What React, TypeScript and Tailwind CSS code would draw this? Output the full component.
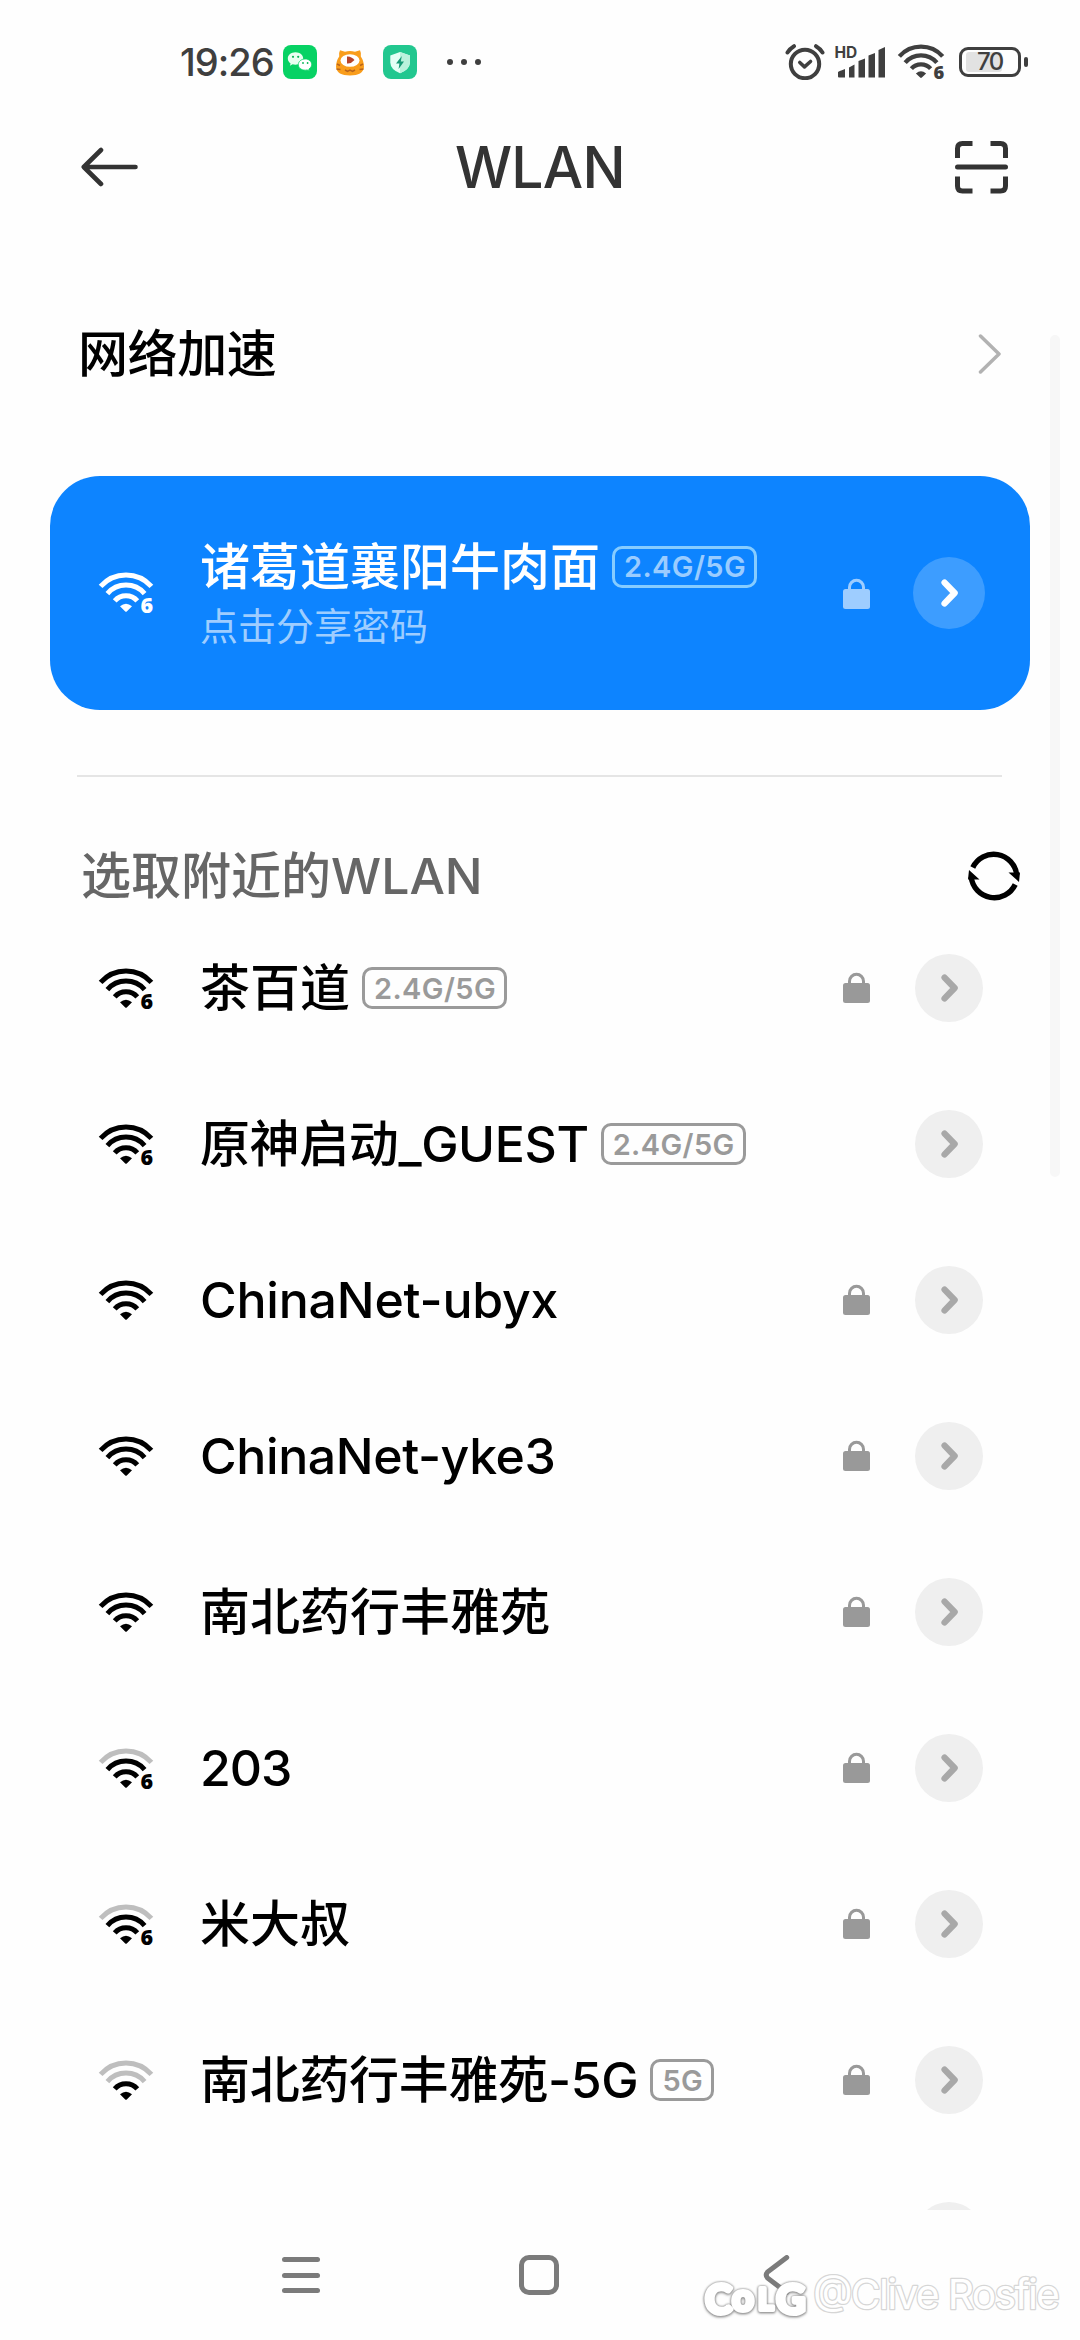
type Network = {
  name: string;
  level: number;
  wifi6?: boolean;
  band?: string;
  locked?: boolean;
  tracking?: string;
};

const networks: Network[] = [
  { name: "茶百道", level: 4, wifi6: true, band: "2.4G/5G", locked: true },
  { name: "原神启动_GUEST", level: 4, wifi6: true, band: "2.4G/5G", tracking: "tracking-[-0.4px]" },
  { name: "ChinaNet-ubyx", level: 4, locked: true, tracking: "tracking-[-0.2px]" },
  { name: "ChinaNet-yke3", level: 4, locked: true, tracking: "tracking-[-0.4px]" },
  { name: "南北药行丰雅苑", level: 4, locked: true },
  { name: "203", level: 3, wifi6: true, locked: true, tracking: "tracking-[-1px]" },
  { name: "米大叔", level: 3, wifi6: true, locked: true },
  { name: "南北药行丰雅苑-5G", level: 2, band: "5G", locked: true, tracking: "tracking-[-0.3px]" },
];

const WifiIcon = ({ level = 4, wifi6 = false, className = "" }: { level?: number; wifi6?: boolean; className?: string }) => {
  const fade = (n: number) => (level >= n ? 1 : 0.25);

  return (
    <svg viewBox="0 0 54 41" className={`overflow-visible ${className}`} fill="none" stroke="currentColor" strokeWidth="5">
      <path d="M1.6 13.4A34 34 0 0 1 52.4 13.4" opacity={fade(4)} />
      <path d="M8.4 20.6A24.6 24.6 0 0 1 45.6 20.6" opacity={fade(3)} />
      <path d="M15.7 27.8A15 15 0 0 1 38.3 27.8" opacity={fade(2)} />
      <path d="M21 33.3Q27 28 33 33.3L28 38.2Q27 39.2 26 38.2Z" fill="currentColor" stroke="none" />
      {wifi6 && (
        <text x="41.6" y="39.5" fontSize="21.5" fontWeight="800" fill="currentColor" stroke="none" className="font-['Open_Sans',sans-serif]">
          6
        </text>
      )}
    </svg>
  );
};

const LockIcon = ({ className = "" }: { className?: string }) => (
  <svg viewBox="0 0 27 31" className={className}>
    <path d="M6.5 13V9.3a7 7 0 0 1 14 0V13" fill="none" stroke="currentColor" strokeWidth="3" />
    <rect y="11" width="27" height="20" rx="2.5" fill="currentColor" />
  </svg>
);

const ArrowIcon = () => (
  <svg viewBox="0 0 18 28" className="ml-0.5 h-7 w-[18px]">
    <path d="M3.6 3.6L13.6 14L3.6 24.4" fill="none" stroke="currentColor" strokeWidth="6.4" strokeLinecap="round" strokeLinejoin="round" />
  </svg>
);

const Band = ({ children, className = "" }: { children: string; className?: string }) => (
  <span className={`flex h-[42px] items-center rounded-[10px] border-3 pr-[8px] pl-[9px] text-[29px] leading-none font-semibold tracking-[0.4px] ${className}`}>
    {children}
  </span>
);

const StatusBar = () => (
  <div className="flex h-[124px] items-center pr-[52px] pl-[180px] text-[#3f3f3f]">
    <span className="w-[103px] text-[38px] leading-none font-medium tracking-[-1px]">19:26</span>
    <svg viewBox="0 0 34 34" className="size-[34px]">
      <rect width="34" height="34" rx="8" fill="#07d264" />
      <path d="M12.5 7.2c-4.4 0-7.7 2.8-7.7 6.3 0 2 1.1 3.7 2.8 4.9l-.7 2.3 2.7-1.4c4.9 1.5 10.6-1.2 10.6-5.8 0-3.500-3.300-6.300-7.700-6.300Z" fill="#e9fff1" />
      <path d="M22.3 14c-4 0-7 2.500-7 5.700 0 3.800 4.400 6.300 8.800 5.200l2.300 1.200-.6-2c1.700-1.100 2.900-2.700 2.900-4.400 0-3.200-2.600-5.700-6.400-5.700Z" fill="#fff" stroke="#07d264" strokeWidth=".8" />
      <g fill="#07b556">
        <circle cx="10" cy="11.8" r="1.1" />
        <circle cx="15.2" cy="11.8" r="1.1" />
        <circle cx="20" cy="18" r=".9" />
        <circle cx="24.6" cy="18" r=".9" />
      </g>
    </svg>
    <svg viewBox="0 0 30 27" className="ml-[18px] h-[27px] w-[30px]">
      <path d="M5 1.2L10 2.8Q15 1.4 20 2.8L25 1.2Q26.5 4 25.8 7.5Q29 12 29 18Q28 26.5 15 26.5Q2 26.5 1 18Q1 12 4.2 7.5Q3.5 4 5 1.2Z" fill="#f99d1c" />
      <path d="M2 15l3 1.500M1.500 20l4 .5M28 15l-3 1.500M28.500 20l-4 .5M10 21l2.500 1.500 2.500-1.500 2.500 1.500 2.500-1.500" fill="none" stroke="#b8641c" strokeWidth="1.5" />
      <ellipse cx="15" cy="11.5" rx="9.5" ry="6.3" fill="#fff" />
      <path d="M12 7.5Q16 7 19.5 11Q16 15 12 14.500Z" fill="#b8432a" />
    </svg>
    <svg viewBox="0 0 34 34" className="ml-[18px] size-[34px]">
      <rect width="34" height="34" rx="8" fill="#22c78f" />
      <path d="M17 7L27 10.5V17.5Q26.5 24.5 17 28.3Q7.500 24.500 7.300 17.500V10.500Z" fill="#e4fff5" />
      <path d="M17 7L27 10.5V17.5Q26.5 24.5 17 28.3Z" fill="#b9f2dc" />
      <path d="M18.8 11L13 18.5H16.4L15.6 24L21 16.6H17.8Z" fill="#159a75" />
    </svg>
    <div className="ml-[30px] flex gap-2">
      <i className="size-1.5 rounded-full bg-current" />
      <i className="size-1.5 rounded-full bg-current" />
      <i className="size-1.5 rounded-full bg-current" />
    </div>

    <svg viewBox="0 0 40 36" className="ml-auto h-9 w-10" fill="none" stroke="currentColor" strokeLinecap="round">
      <circle cx="20" cy="20" r="14.2" strokeWidth="4" />
      <path d="M14.8 18.5L19.5 22.8L25.5 17.5" strokeWidth="3.6" strokeLinejoin="round" />
      <path d="M2.5 8.5Q5 4.5 9 2.2M37.5 8.5Q35 4.5 31 2.2" strokeWidth="4" />
    </svg>
    <svg viewBox="0 0 52 34" className="ml-[10px] h-[34px] w-[52px] overflow-visible" fill="currentColor">
      <text x="-.5" y="12.5" fontSize="15.5" fontWeight="700">HD</text>
      <path d="M3 27Q3 26.5 10 24V32.5H4Q3 32.5 3 31.5ZM14 22.5L19.5 19.5V32.5H14ZM23.5 16L30 13.5V32.5H23.5ZM33.5 10.5L40 8V32.5H33.5ZM43.5 5L50 2V32.5H43.5Z" />
    </svg>
    <WifiIcon wifi6 className="ml-[11px] h-[35px] w-[46px]" />
    <div className="ml-[15px] flex h-[30px] w-[62px] items-center rounded-[9px] border-3 border-current p-[4px]">
      <div className="relative h-5 w-[36px] rounded-[3px] bg-[#e2e2e2]">
        <span className="absolute top-0 left-[11px] text-[24px] leading-5 font-medium tracking-[-1.5px]">70</span>
      </div>
    </div>
    <i className="ml-[3px] h-2.5 w-1 rounded-full bg-current" />
  </div>
);

const Header = () => (
  <header className="flex h-[86px] items-center pr-[71px] pl-[81px] text-[#333]">
    <svg viewBox="0 0 57 40" className="h-10 w-[57px]" fill="none" stroke="currentColor" strokeWidth="4.6" strokeLinecap="round" strokeLinejoin="round">
      <path d="M54.5 20H3M20 3L2.8 20L20 37" />
    </svg>
    <h1 className="ml-[317px] text-[57px] leading-none font-[450] tracking-[-0.8px]">WLAN</h1>
    <svg viewBox="0 0 55 54" className="ml-auto h-[54px] w-[55px]" fill="none" stroke="currentColor" strokeWidth="5">
      <path d="M3.5 18V8.5Q3.5 3.5 8.5 3.5H18.5M36.5 3.5H46.5Q51.5 3.5 51.5 8.5V18M51.5 36.5V46Q51.5 51 46.5 51H36.5M18.5 51H8.5Q3.5 51 3.5 46V36.5" />
      <path d="M3.5 27H51.5" strokeLinecap="round" />
    </svg>
  </header>
);

const NetworkRow = ({ network }: { network: Network }) => (
  <li className="flex h-[156px] items-center pr-[97px] pl-[99px]">
    <WifiIcon level={network.level} wifi6={network.wifi6} className="mt-0.5 h-[41px] w-[54px]" />
    <span className={`ml-[47px] text-[50px] leading-none font-medium whitespace-nowrap text-black ${network.tracking ?? ""}`}>{network.name}</span>
    {network.band && <Band className="ml-3 border-[#9a9a9a] text-[#9a9a9a]">{network.band}</Band>}
    {network.locked && <LockIcon className="mb-0.5 ml-auto h-[31px] w-[27px] text-[#999]" />}
    <div className={`${network.locked ? "ml-[45px]" : "ml-auto"} flex size-[68px] items-center justify-center rounded-full bg-[#efefef] text-[#a8a8a8]`}>
      <ArrowIcon />
    </div>
  </li>
);

const NavBar = () => (
  <nav className="flex h-[130px] items-center pl-[282px] text-[#7b7b7b]">
    <div className="flex w-[38px] flex-col gap-[10.5px]">
      <i className="h-[5px] rounded-full bg-current" />
      <i className="h-[5px] rounded-full bg-current" />
      <i className="h-[5px] rounded-full bg-current" />
    </div>
    <div className="ml-[199px] size-10 rounded-[10px] border-[5px] border-current" />
    <svg viewBox="0 0 28 40" className="ml-[204px] h-10 w-7" fill="none" stroke="currentColor" strokeWidth="5" strokeLinecap="round">
      <path d="M23.7 2.5L4.5 17Q2 20 4.5 23L23.7 37.5" />
    </svg>
  </nav>
);

const Watermark = () => (
  <svg viewBox="0 0 380 60" className="absolute right-0 bottom-[14px] h-[60px] w-[380px]">
    <g
      className="font-['Lato',sans-serif] [filter:drop-shadow(0_0_1px_#888)_drop-shadow(0_1px_1px_#999)]"
      fill="#fff"
      stroke="#fff"
      strokeWidth="4"
      strokeLinejoin="round"
      fontWeight="900"
    >
      <text x="5" y="48" fontSize="41">C</text>
      <text x="32" y="45" fontSize="38">o</text>
      <text x="58" y="44" fontSize="30">L</text>
      <text x="76" y="48" fontSize="41">G</text>
    </g>
    <text
      x="113"
      y="43"
      fontSize="41"
      textLength="247"
      fill="#fff"
      stroke="#d6d6d6"
      strokeWidth="2.5"
      paintOrder="stroke"
      strokeLinejoin="round"
    >
      @Clive Rosfie
    </text>
  </svg>
);

export default function App() {
  return (
    <div className="relative flex h-[2340px] w-[1080px] flex-col bg-[#fefefe] font-['Inter','Noto_Sans_CJK_SC',sans-serif]">
      <StatusBar />
      <Header />

      <main className="h-[2000px] overflow-hidden">
        <div className="mt-[104px] flex h-[80px] items-center justify-between pr-[78px] pl-[78px]">
          <span className="text-[50px] leading-none font-medium tracking-[-0.4px] text-black">网络加速</span>
          <svg viewBox="0 0 24 40" className="h-10 w-6" fill="none" stroke="#b2b2b2" strokeWidth="3.5" strokeLinecap="round" strokeLinejoin="round">
            <path d="M2.5 2L21 20L2.5 38" />
          </svg>
        </div>

        <section className="mx-[50px] mt-[82px] flex h-[234px] items-center rounded-[50px] bg-[#0d84ff] pr-[45px] pl-[49px] text-white">
          <WifiIcon wifi6 className="h-[41px] w-[54px]" />
          <div className="mt-[5px] ml-[47px] flex flex-col">
            <div className="flex items-center">
              <span className="text-[50px] leading-[60px] font-medium whitespace-nowrap">诸葛道襄阳牛肉面</span>
              <Band className="ml-3 border-[#86ccff] text-[#9accff]">2.4G/5G</Band>
            </div>
            <span className="text-[38px] leading-[58px] text-[#9ecdff]">点击分享密码</span>
          </div>
          <LockIcon className="ml-auto h-[31px] w-[27px] text-[#9ecdff]" />
          <div className="ml-[43px] flex size-[72px] items-center justify-center rounded-full bg-[#3d9dff]">
            <ArrowIcon />
          </div>
        </section>

        <hr className="mt-[65px] mr-[78px] ml-[77px] h-0.5 border-0 bg-[#e5e5e5]" />

        <div className="mt-[59px] flex h-[80px] items-center justify-between pr-[60px] pl-[81px]">
          <h2 className="text-[50px] leading-none font-medium text-[#666]">选取附近的WLAN</h2>
          <svg viewBox="0 0 52 52" className="size-[52px]">
            <path d="M4.8 17.5A23.2 23.2 0 0 1 48.8 25M47.2 34.5A23.2 23.2 0 0 1 3.2 27" fill="none" stroke="#000" strokeWidth="5.4" />
            <path d="M40.5 22.500H52L51 32ZM11.500 29.500H0L1 20Z" fill="#000" />
          </svg>
        </div>

        <ul className="-mt-[6px]">
          {networks.map((network) => (
            <NetworkRow key={network.name} network={network} />
          ))}
          <li className="flex h-[156px] items-center justify-end pr-[97px]">
            <div className="size-[68px] rounded-full bg-[#efefef]" />
          </li>
        </ul>
      </main>

      <NavBar />

      <div className="absolute top-[335px] right-5 h-[842px] w-2.5 rounded-full bg-[#f7f7f7]" />
      <Watermark />
    </div>
  );
}
